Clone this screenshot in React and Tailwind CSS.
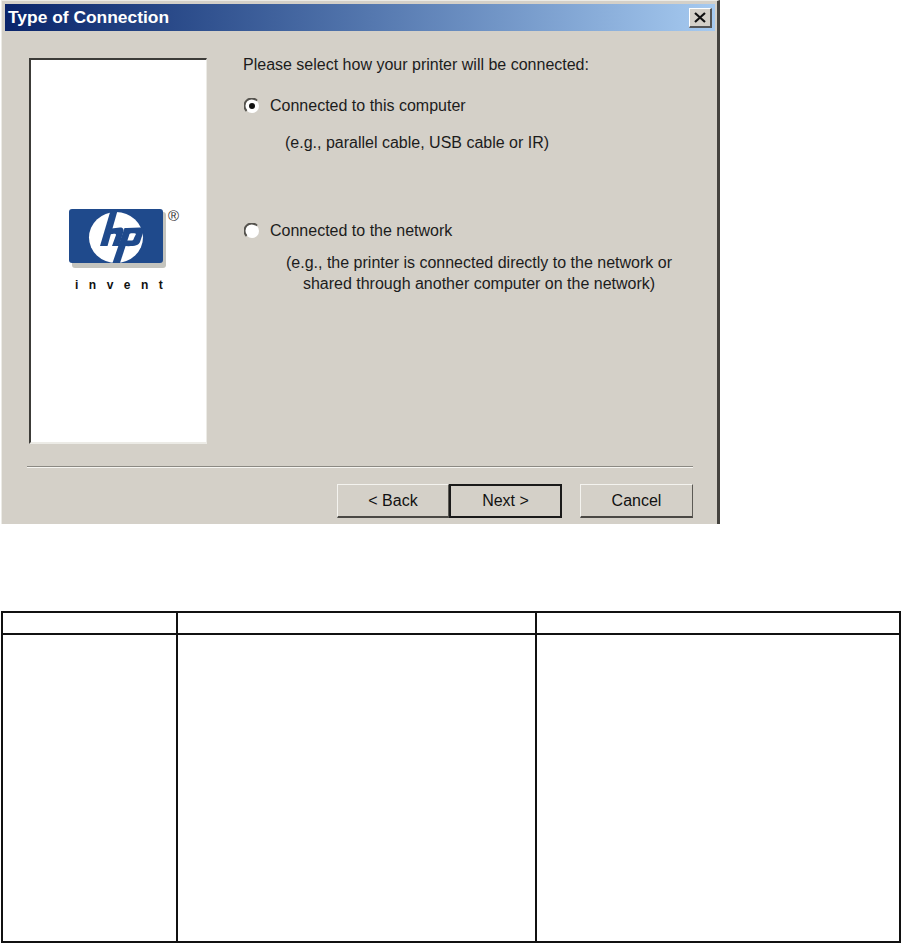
const LOGO_BLUE = '#1f4a8c';

const HpLogo = () => (
  <div className="flex flex-col items-start">
    <div className="relative">
      <svg width="98" height="60" viewBox="0 0 98 60">
        <rect x="3" y="3" width="94" height="56" rx="3" fill="#c4c4be" />
        <rect x="0" y="0" width="94" height="54" rx="3" fill={LOGO_BLUE} />
        <ellipse cx="47" cy="28.5" rx="27" ry="25.5" fill="#fff" />
        <path d="M42 0 L49 0 L38.5 37 L31 37 Z" fill={LOGO_BLUE} />
        <path d="M38 20 L51 18.5 C55 18.5 55 21 54 24 L50 37 L43 37 L47 26 C47.5 24 42 24.5 37 27 Z" fill={LOGO_BLUE} />
        <path d="M55.5 19 L62.5 19 L51 54 L43.5 54 Z" fill={LOGO_BLUE} />
        <path d="M58 19 L71 18.5 C75 18.5 75 21 74 24 L71 33 C69.5 37 64 37.5 54 37 L55.5 31.5 L62 31.5 C64 31.5 64.5 31 65 29 L67 25 C67 24 60 24 57 26 Z" fill={LOGO_BLUE} />
      </svg>
      <span className="absolute left-[99px] top-[-2px] text-[15px] leading-[18px] text-[#333] font-['Liberation_Sans',sans-serif]">®</span>
    </div>
    <div className="mt-[10px] ml-[6px] text-[12px] font-bold tracking-[10.5px] text-[#111] font-['Liberation_Sans',sans-serif] leading-none whitespace-nowrap">invent</div>
  </div>
);

const TitleBar = () => (
  <div className="ml-[3px] mr-[2px] mt-[3px] h-[27px] flex items-center justify-between bg-gradient-to-r from-[#0a246a] to-[#a6caf0] pl-[3px] pr-[3px]">
    <span className="text-white font-bold text-[17.4px] font-['Liberation_Sans',sans-serif]">Type of Connection</span>
    <button className="w-[23px] h-[20px] flex items-center justify-center bg-[#d4d0c8] border-t border-l border-white border-r-2 border-b-2 border-r-[#555] border-b-[#555]">
      <svg width="12" height="11" viewBox="0 0 12 11">
        <path d="M1 1 L11 10 M11 1 L1 10" stroke="#111" strokeWidth="2.2" fill="none" />
      </svg>
    </button>
  </div>
);

const Radio = ({ checked }) => (
  <svg width="16" height="16" viewBox="0 0 16 16" className="shrink-0 ml-[1px]">
    <circle cx="8" cy="8" r="7" fill="#fff" />
    <path d="M2.6 13 A7 7 0 0 1 13 2.6" stroke="#55534e" strokeWidth="2" fill="none" />
    {checked && <circle cx="8" cy="8" r="3" fill="#111" />}
  </svg>
);

const DialogButton = ({ children, isDefault, className }) => (
  <button
    className={`h-[34px] text-[16px] text-[#111] bg-[#d4d0c8] ${isDefault
      ? 'border-2 border-[#1a1a1a]'
      : 'border border-t-[#f4f3ef] border-l-[#f4f3ef] border-r-[#5c5a55] border-b-[#4a4844] border-b-2'} ${className || ''}`}
  >
    {children}
  </button>
);

const Dialog = () => (
  <div className="ml-[1px] w-[719px] h-[524px] bg-[#d4d0c8] border-t border-t-[#ecebe6] border-l border-l-[#ecebe6] border-r-[3px] border-r-[#45433f] flex flex-col">
    <TitleBar />
    <div className="flex pl-[27px] pt-[27px]">
      <div className="w-[178px] h-[386px] bg-white border-t-2 border-l-2 border-t-[#3c3b38] border-l-[#3c3b38] border-r border-b-2 border-r-[#ecebe6] border-b-[#ecebe6] flex flex-col items-start pt-[149px] pl-[38px] shrink-0">
        <HpLogo />
      </div>
      <div className="ml-[36px] text-[16px] leading-[18px] text-[#1c1c1c] font-['Liberation_Sans',sans-serif]">
        <p className="mt-[-2px]">Please select how your printer will be connected:</p>
        <div className="flex items-center gap-[10px] mt-[23px] h-[18px]">
          <Radio checked />
          <span>Connected to this computer</span>
        </div>
        <p className="ml-[42px] mt-[19px]">(e.g., parallel cable, USB cable or IR)</p>
        <div className="flex items-center gap-[10px] mt-[70px] h-[18px]">
          <Radio />
          <span>Connected to the network</span>
        </div>
        <p className="mt-[12px] text-center w-[428px] ml-[22px] leading-[21px]">
          (e.g., the printer is connected directly to the network or
          <br />
          shared through another computer on the network)
        </p>
      </div>
    </div>
    <div className="ml-[25px] mr-[24px] mt-[22px] h-[2px] border-t border-t-[#8b8983] border-b border-b-[#f6f5f1]" />
    <div className="flex justify-end mr-[24px] mt-[16px] font-['Liberation_Sans',sans-serif]">
      <DialogButton className="w-[112px]">&lt; Back</DialogButton>
      <DialogButton isDefault className="w-[113px]">Next &gt;</DialogButton>
      <DialogButton className="ml-[18px] w-[113px]">Cancel</DialogButton>
    </div>
  </div>
);

const EmptyTable = () => (
  <div className="ml-[1px] mt-[87px] w-[900px] h-[332px] border-2 border-[#111] grid grid-cols-[175px_359px_1fr] grid-rows-[22px_1fr] bg-white">
    <div className="border-r-2 border-b-2 border-[#111]" />
    <div className="border-r-2 border-b-2 border-[#111]" />
    <div className="border-b-2 border-[#111]" />
    <div className="border-r-2 border-[#111]" />
    <div className="border-r-2 border-[#111]" />
    <div />
  </div>
);

export default function App() {
  return (
    <div className="w-[902px] h-[943px] bg-white overflow-hidden font-['Liberation_Sans',sans-serif]">
      <Dialog />
      <EmptyTable />
    </div>
  );
}
